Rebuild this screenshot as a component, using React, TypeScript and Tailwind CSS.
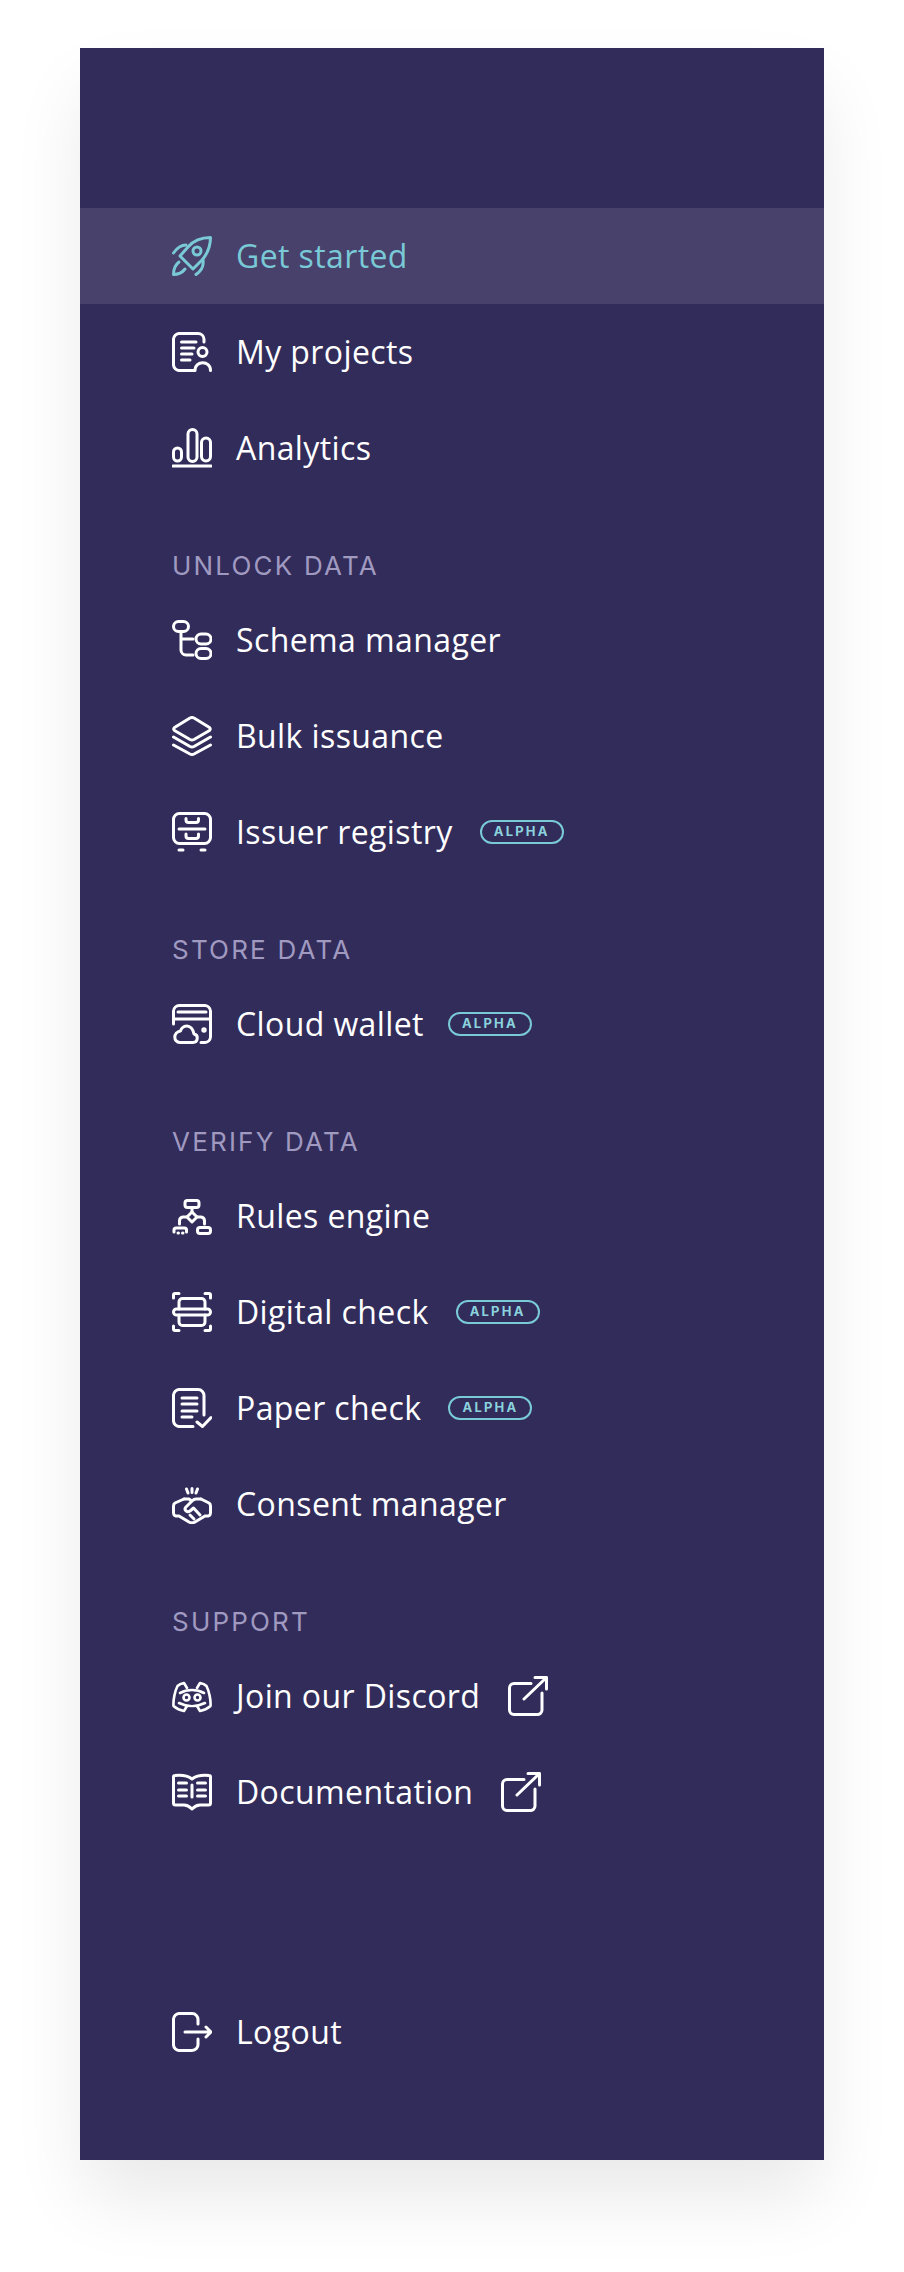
import type { ReactNode } from "react";

function Icon({ children, className = "" }: { children: ReactNode; className?: string }) {
  return (
    <svg
      viewBox="0 0 40 40"
      fill="none"
      stroke="currentColor"
      strokeWidth="3"
      strokeLinecap="round"
      strokeLinejoin="round"
      className={`w-10 h-10 shrink-0 ${className}`}
    >
      {children}
    </svg>
  );
}

const icons: Record<string, ReactNode> = {
  rocket: (
    <>
      <path d="M38.5 1.5C30 1.5 22 4 16 11L8 20L21 33L30 24C36 17 38.5 10 38.5 1.5Z" />
      <circle cx="25" cy="15" r="4" />
      <path d="M14 9C9 9 5 12 1.5 17" />
      <path d="M7 26C3 29 1.5 33 1.5 38.5C6 38.5 10 37 13 33" />
      <path d="M31 24C32 30 29 35 24 38.5" />
    </>
  ),
  projects: (
    <>
      <path d="M32 10V7A6 6 0 0 0 26 1.5H8A6 6 0 0 0 1.5 8V32A6 6 0 0 0 8 38.5H22" />
      <path d="M9.5 10H24M9.5 16H22M9.5 22H20M9.5 28H18" />
      <circle cx="30.5" cy="20" r="4.5" />
      <path d="M23 38.5C23 28 38.5 28 38.5 38.5" />
    </>
  ),
  analytics: (
    <>
      <rect x="1.5" y="20" width="8" height="13" rx="4" />
      <rect x="16" y="1.5" width="9" height="32" rx="4.5" />
      <rect x="29.5" y="10" width="9" height="23" rx="4.5" />
      <path d="M1 38H39" strokeWidth="3" />
    </>
  ),
  schema: (
    <>
      <rect x="1.5" y="1.5" width="15" height="10" rx="5" />
      <path d="M9 13V30A5 5 0 0 0 14 35H21M9 19H21" />
      <rect x="24" y="14" width="15" height="10" rx="5" />
      <rect x="24" y="28.5" width="15" height="10" rx="5" />
    </>
  ),
  layers: (
    <>
      <path d="M18 2L2.5 11.5Q1 13 2.5 14.5L18 23.5Q20 24.5 22 23.5L37.5 14.5Q39 13 37.5 11.5L22 2Q20 1 18 2Z" />
      <path d="M1.5 21L18 30.5Q20 31.5 22 30.5L38.5 21" />
      <path d="M1.5 29L18 38Q20 39 22 38L38.5 29" />
    </>
  ),
  registry: (
    <>
      <rect x="1.5" y="1.5" width="37" height="30" rx="6" />
      <path d="M7 17H33" />
      <path d="M14 6.5V8Q14 10.5 16.5 10.5H24Q26.5 10.5 26.5 8V6.5" />
      <path d="M14 22V24Q14 26.5 16.5 26.5H24Q26.5 26.5 26.5 24V22" />
      <path d="M7 38H11M29 38H33" strokeWidth="3" />
    </>
  ),
  wallet: (
    <>
      <path d="M1.5 20V7A6 6 0 0 1 7.5 1.5H33A6 6 0 0 1 38.5 7V33A6 6 0 0 1 33 38.5H29" />
      <path d="M6 8H34M1.5 15H38.5" />
      <path d="M8 38.5H21C26 38.5 27 31 22 30C21 25 18 22 15 22C11 22 9 25 8.5 27C1 28 1 38.5 8 38.5Z" />
      <circle cx="32" cy="26" r="1.2" />
    </>
  ),
  rules: (
    <>
      <rect x="13" y="4.5" width="14" height="7" rx="2.5" />
      <path d="M20 12V16" />
      <path d="M20 16L25 21L20 26L15 21Z" />
      <path d="M15 21H11A4 4 0 0 0 7.5 25V28M25 21H29A4 4 0 0 1 32.5 25V28" />
      <path d="M2 36V34Q2 32 4 32H12.5Q14.5 32 14.5 34V36M6 37H6.5M10.5 37H11" />
      <rect x="25.5" y="31.5" width="13" height="6" rx="2.5" />
    </>
  ),
  scan: (
    <>
      <path d="M1.5 6V3Q1.5 1.5 3 1.5H7M33 1.5H37Q38.5 1.5 38.5 3V6M1.5 34V37Q1.5 38.5 3 38.5H7M33 38.5H37Q38.5 38.5 38.5 37V34" />
      <path d="M7 17V10A3.5 3.5 0 0 1 10.5 6.500H29.500A3.5 3.5 0 0 1 33 10V17" />
      <path d="M7 23V30A3.5 3.5 0 0 0 10.5 33.500H29.500A3.5 3.5 0 0 0 33 30V23" />
      <rect x="1.5" y="17" width="37" height="6" rx="3" />
    </>
  ),
  paper: (
    <>
      <path d="M32 27V8A6 6 0 0 0 26 1.5H8A6 6 0 0 0 1.5 8V32A6 6 0 0 0 8 38.5H21" />
      <path d="M10 10H25M10 16H25M10 23H25M10 29H20" />
      <path d="M25 34L30.500 38.500L39 29.500" />
    </>
  ),
  handshake: (
    <>
      <path d="M14.500 5L16 9M20 4.500V8.500M25.500 5L24 9" />
      <path d="M12 15L3 19Q1.500 20 1.500 22V29Q1.500 31 3.500 32H7L17 38Q20 39.500 23 38L33 32H36.500Q38.500 31 38.500 29V22Q38.500 20 37 19L29 15" />
      <path d="M29 15H24Q22 15 20 17L13.500 23.500C12 26 15 29 18 27L21.500 24L28 31" />
      <path d="M12 15H17L19 16.500" />
      <path d="M22 35L18 31" />
    </>
  ),
  discord: (
    <g strokeWidth="2.6">
      <path d="M15 12L12 7C9 7.500 6.500 9 5.500 10C3 15 1 24 1.500 30C5 33 9 34.500 12 35L15 30" />
      <path d="M25 12L28 7C31 7.500 33.500 9 34.500 10C37 15 39 24 38.500 30C35 33 31 34.500 28 35L25 30" />
      <path d="M8 17C15 13 25 13 32 17" />
      <path d="M7 27C15 31 25 31 33 27" />
      <circle cx="14.500" cy="21.500" r="3" />
      <circle cx="25.500" cy="21.500" r="3" />
    </g>
  ),
  book: (
    <>
      <path d="M20 7C15 3 8 3 3 3.500Q1.500 3.500 1.500 5V31Q1.500 33 3.500 33H12C15 33 17 34 20 37C23 34 25 33 28 33H36.500Q38.500 33 38.500 31V5Q38.500 3.500 37 3.500C32 3 25 3 20 7Z" />
      <path d="M20 13V25" />
      <path d="M6.500 11H14.500M6.500 18H14.500M6.500 24H14.500M25.500 11H33.500M25.500 18H33.500M25.500 24H33.500" />
    </>
  ),
  logout: (
    <>
      <path d="M26 12V8A6 6 0 0 0 20 1.500H8A6 6 0 0 0 1.500 8V32A6 6 0 0 0 8 38.500H20A6 6 0 0 0 26 32V27" />
      <path d="M13 20H39M34 15L39 20L34 25" />
    </>
  ),
};

function ExternalIcon() {
  return (
    <Icon className="ml-[28px]">
      <path d="M23 7.500H6A4.500 4.500 0 0 0 1.500 12V34A4.500 4.500 0 0 0 6 38.500H29A4.500 4.500 0 0 0 34 34V17" />
      <path d="M16 23L38.500 1.500M27 1.500H38.500V13" />
    </Icon>
  );
}

function Alpha({ className }: { className: string }) {
  return (
    <span
      className={`flex items-center justify-center w-[84px] h-[24px] rounded-full border-2 border-[#79c9d6] text-[#8ad3de] text-[13px] font-bold tracking-[2.2px] font-['Inter',sans-serif] ${className}`}
    >
      ALPHA
    </span>
  );
}

function NavItem({
  icon,
  label,
  active,
  children,
}: {
  icon: string;
  label: string;
  active?: boolean;
  children?: ReactNode;
}) {
  return (
    <div
      className={`flex items-center h-24 pl-[92px] ${
        active ? "bg-[#48416c] text-[#79c9d6]" : "text-white"
      }`}
    >
      <Icon>{icons[icon]}</Icon>
      <span className="ml-6 text-[32px] leading-[40px] tracking-[0.4px]">{label}</span>
      {children}
    </div>
  );
}

function SectionTitle({ children }: { children: string }) {
  return (
    <div className="mt-[50px] mb-[6px] pl-[92px] h-10 leading-10 text-[26px] tracking-[2.2px] text-[#a09ac1] font-['Inter',sans-serif]">
      {children}
    </div>
  );
}

export default function App() {
  return (
    <div className="bg-white px-20 pt-12 pb-28 font-['Open_Sans',sans-serif]">
      <div className="bg-[#322c5b] pt-40 pb-20 shadow-[0_40px_70px_-4px_rgba(0,0,0,0.09)]">
        <NavItem icon="rocket" label="Get started" active />
        <NavItem icon="projects" label="My projects" />
        <NavItem icon="analytics" label="Analytics" />

        <SectionTitle>UNLOCK DATA</SectionTitle>
        <NavItem icon="schema" label="Schema manager" />
        <NavItem icon="layers" label="Bulk issuance" />
        <NavItem icon="registry" label="Issuer registry">
          <Alpha className="ml-[27px]" />
        </NavItem>

        <SectionTitle>STORE DATA</SectionTitle>
        <NavItem icon="wallet" label="Cloud wallet">
          <Alpha className="ml-6" />
        </NavItem>

        <SectionTitle>VERIFY DATA</SectionTitle>
        <NavItem icon="rules" label="Rules engine" />
        <NavItem icon="scan" label="Digital check">
          <Alpha className="ml-[27px]" />
        </NavItem>
        <NavItem icon="paper" label="Paper check">
          <Alpha className="ml-[27px]" />
        </NavItem>
        <NavItem icon="handshake" label="Consent manager" />

        <SectionTitle>SUPPORT</SectionTitle>
        <NavItem icon="discord" label="Join our Discord">
          <ExternalIcon />
        </NavItem>
        <NavItem icon="book" label="Documentation">
          <ExternalIcon />
        </NavItem>

        <div className="mt-36">
          <NavItem icon="logout" label="Logout" />
        </div>
      </div>
    </div>
  );
}
